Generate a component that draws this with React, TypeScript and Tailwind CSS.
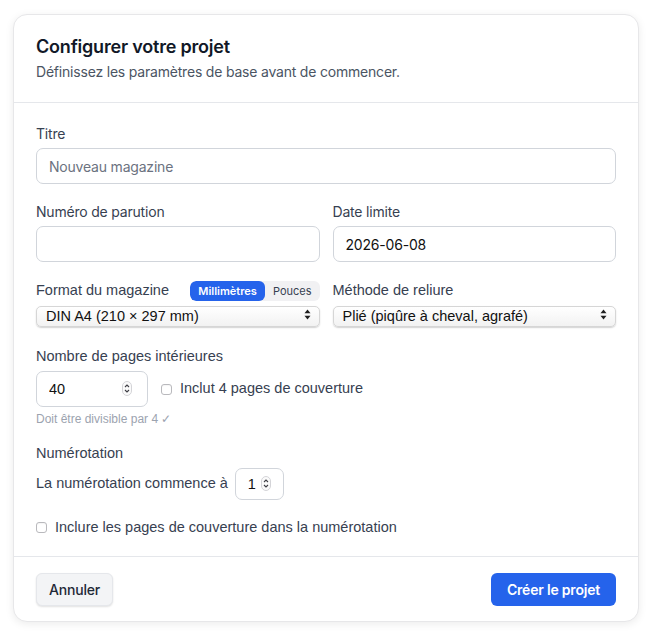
import { useState } from "react";

const inter = { fontFamily: "Inter, 'Noto Sans', sans-serif" };
const arial = { fontFamily: "'Liberation Sans', Arial, sans-serif" };

const Stepper = () => (
  <svg width="10" height="15" viewBox="0 0 10 15" className="pointer-events-none">
    <rect x="0.5" y="0.5" width="9" height="14" rx="4.5" fill="#fafafa" stroke="#d4d4d8" />
    <path d="M3 6 L5 4 L7 6" fill="none" stroke="#3f3f46" strokeWidth="1.1" />
    <path d="M3 9 L5 11 L7 9" fill="none" stroke="#3f3f46" strokeWidth="1.1" />
  </svg>
);

const UpDown = () => (
  <svg width="7" height="11" viewBox="0 0 7 11" className="pointer-events-none">
    <path d="M3.5 0.5 L6.5 4.3 L0.5 4.3 Z" fill="#1f1f1f" />
    <path d="M3.5 10.5 L6.5 6.7 L0.5 6.7 Z" fill="#1f1f1f" />
  </svg>
);

const NativeSelect = ({ value, options }: { value: string; options: string[] }) => (
  <div className="relative">
    <select
      defaultValue={value}
      style={arial}
      className="w-full h-[21px] appearance-none rounded-[5px] border border-[#d6d6d6] bg-gradient-to-b from-white to-[#f2f2f2] pl-[9px] pr-6 text-[14.5px] leading-[19px] text-[#111] shadow-[0_1px_1.5px_rgba(0,0,0,0.18)] outline-none"
    >
      {options.map((o) => (
        <option key={o}>{o}</option>
      ))}
    </select>
    <span className="absolute right-[9px] top-[5px] flex">
      <UpDown />
    </span>
  </div>
);

const Check = ({ label }: { label: string }) => (
  <label className="flex items-center gap-[8px] text-[14.5px] text-[#374151]" style={arial}>
    <span className="w-[11px] h-[11px] rounded-[3px] border border-[#b9b9bd] bg-white shadow-[inset_0_1px_1px_rgba(0,0,0,0.04)]" />
    {label}
  </label>
);

export default function App() {
  const [unit, setUnit] = useState<"mm" | "in">("mm");

  return (
    <div className="min-h-screen bg-white pt-[14px] px-[13px] tracking-[-0.2px]" style={inter}>
      <div className="rounded-[14px] border border-[#e7e7e9] bg-white shadow-[0_2px_8px_rgba(0,0,0,0.08)]">
        <div className="px-[22px] pt-[20px] pb-[20px] border-b border-[#e5e7eb]">
          <h1 className="text-[18px] leading-[24px] font-semibold text-[#111827]">
            Configurer votre projet
          </h1>
          <p className="mt-[3px] text-[14px] leading-[20px] text-[#4b5563]">
            Définissez les paramètres de base avant de commencer.
          </p>
        </div>

        <div className="px-[22px] pt-[21px] pb-[17px]">
          <div className="text-[14px] leading-[20px] text-[#374151]">Titre</div>
          <input
            placeholder="Nouveau magazine"
            className="mt-[4px] w-full h-[36px] rounded-[7px] border border-[#d1d5db] px-[12px] text-[14px] text-[#111] placeholder:text-[#6b7280] outline-none"
          />

          <div className="mt-[18px] grid grid-cols-2 gap-[13px]">
            <div>
              <div className="text-[14px] leading-[20px] text-[#374151]">Numéro de parution</div>
              <input className="mt-[4px] w-full h-[36px] rounded-[7px] border border-[#d1d5db] px-[12px] text-[14px] outline-none" />
            </div>
            <div>
              <div className="text-[14px] leading-[20px] text-[#374151]">Date limite</div>
              <input
                defaultValue="2026-06-08"
                className="mt-[4px] w-full h-[36px] rounded-[7px] border border-[#d1d5db] px-[12px] text-[14px] text-[#111] outline-none"
              />
            </div>
          </div>

          <div className="mt-[18px] grid grid-cols-2 gap-[13px] tracking-normal" style={arial}>
            <div>
              <div className="flex items-center justify-between h-[21px]">
                <span className="text-[14.5px] text-[#374151]">Format du magazine</span>
                <div className="flex rounded-[6px] bg-[#f1f1f3] text-[11px] leading-[20px] font-semibold overflow-hidden" style={inter}>
                  <button
                    onClick={() => setUnit("mm")}
                    className={
                      unit === "mm"
                        ? "px-[8px] rounded-[6px] bg-[#2563eb] text-white"
                        : "px-[8px] text-[#374151] font-normal"
                    }
                  >
                    Millimètres
                  </button>
                  <button
                    onClick={() => setUnit("in")}
                    className={
                      unit === "in"
                        ? "px-[8px] rounded-[6px] bg-[#2563eb] text-white"
                        : "px-[8px] text-[#374151] font-normal"
                    }
                  >
                    Pouces
                  </button>
                </div>
              </div>
              <div className="mt-[3px]">
                <NativeSelect
                  value="DIN A4 (210 × 297 mm)"
                  options={["DIN A4 (210 × 297 mm)", "DIN A5 (148 × 210 mm)", "US Letter (216 × 279 mm)"]}
                />
              </div>
            </div>
            <div>
              <div className="flex items-center h-[21px] text-[14.5px] text-[#374151]">Méthode de reliure</div>
              <div className="mt-[3px]">
                <NativeSelect
                  value="Plié (piqûre à cheval, agrafé)"
                  options={["Plié (piqûre à cheval, agrafé)", "Dos carré collé", "Spirale"]}
                />
              </div>
            </div>
          </div>

          <div className="tracking-normal" style={arial}>
            <div className="mt-[18px] text-[14.5px] leading-[20px] text-[#374151]">Nombre de pages intérieures</div>
            <div className="mt-[5px] flex items-center gap-[13px]">
              <div className="relative w-[112px]">
                <input
                  defaultValue="40"
                  className="w-full h-[36px] rounded-[7px] border border-[#d1d5db] pl-[12px] pr-6 text-[14.5px] text-[#111] outline-none"
                />
                <span className="absolute right-[16px] top-[10px] flex">
                  <Stepper />
                </span>
              </div>
              <Check label="Inclut 4 pages de couverture" />
            </div>
            <div className="mt-[4px] text-[12px] leading-[16px] text-[#9ca3af]">Doit être divisible par 4 ✓</div>

            <div className="mt-[16px] text-[14.5px] leading-[20px] text-[#374151]">Numérotation</div>
            <div className="mt-[5px] flex items-center gap-[7px]">
              <span className="text-[14.5px] text-[#374151]">La numérotation commence à</span>
              <div className="relative w-[49px]">
                <input
                  defaultValue="1"
                  className="w-full h-[32px] rounded-[7px] border border-[#d1d5db] pl-[12px] pr-5 text-[14.5px] text-[#111] outline-none"
                />
                <span className="absolute right-[13px] top-[8px] flex">
                  <Stepper />
                </span>
              </div>
            </div>
            <div className="mt-[17px]">
              <Check label="Inclure les pages de couverture dans la numérotation" />
            </div>
          </div>
        </div>

        <div className="flex items-center justify-between border-t border-[#e5e7eb] px-[22px] pt-[16px] pb-[15px]">
          <button className="h-[33px] px-[12px] rounded-[6px] border border-[#e5e7eb] bg-[#f3f4f6] text-[14px] font-medium text-[#1f2937] shadow-[0_1px_2px_rgba(0,0,0,0.12)]">
            Annuler
          </button>
          <button className="h-[33px] px-[16px] rounded-[6px] bg-[#2563eb] text-[14px] font-semibold text-white">
            Créer le projet
          </button>
        </div>
      </div>
    </div>
  );
}
